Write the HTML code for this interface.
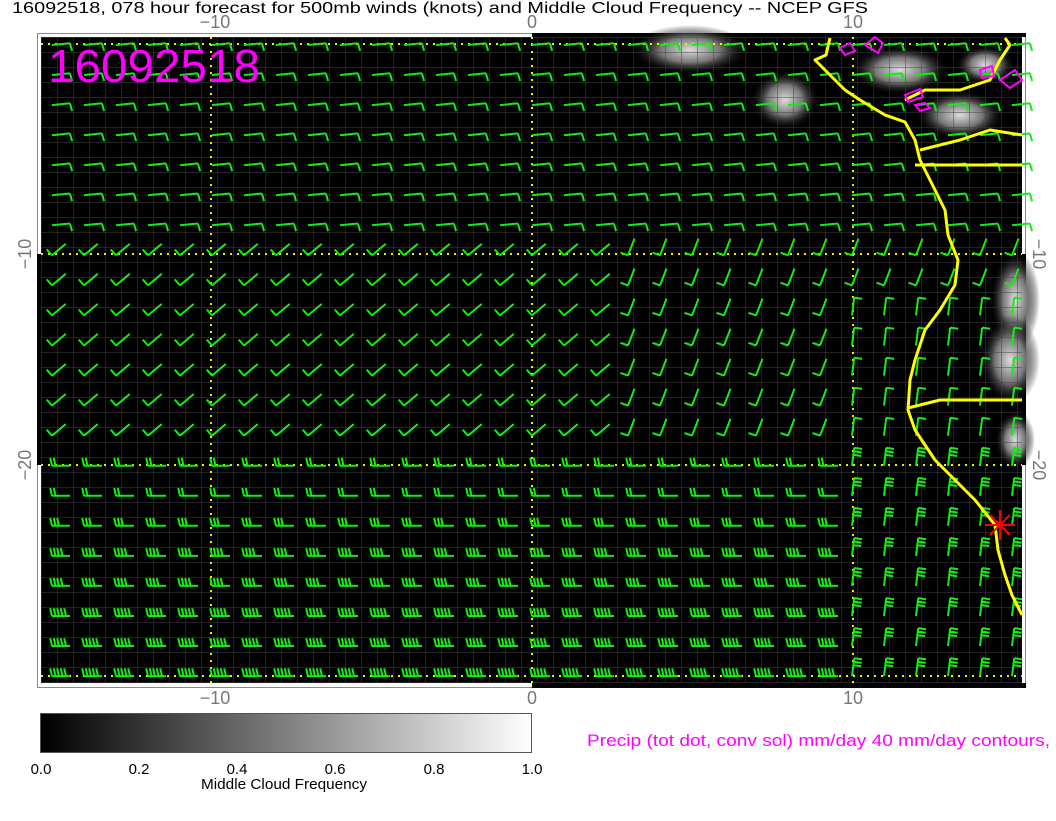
<!DOCTYPE html>
<html><head><meta charset="utf-8"><style>
body{margin:0;width:1056px;height:816px;background:#fff;overflow:hidden;font-family:"Liberation Sans",sans-serif}
</style></head><body>
<svg id="s" width="1056" height="816" xmlns="http://www.w3.org/2000/svg" font-family="Liberation Sans, sans-serif">
<defs>
<linearGradient id="cb"><stop offset="0" stop-color="#000"/><stop offset="1" stop-color="#fff"/></linearGradient>
<radialGradient id="cl"><stop offset="0" stop-color="#ddd"/><stop offset=".5" stop-color="#777"/><stop offset="1" stop-color="#000" stop-opacity="0"/></radialGradient>
<pattern id="gr" x="41" y="37" width="16" height="15" patternUnits="userSpaceOnUse"><path d="M0 0V15M0 0H16" stroke="#444" stroke-width="1" fill="none"/></pattern>
</defs>
<text x="12" y="13" font-size="16" textLength="856" lengthAdjust="spacingAndGlyphs">16092518, 078 hour forecast for 500mb winds (knots) and Middle Cloud Frequency -- NCEP GFS</text>
<rect x="37.5" y="33.5" width="988" height="654" fill="#fff" stroke="#888"/>
<rect x="532" y="33" width="494" height="4" fill="#000"/>
<rect x="532" y="683" width="494" height="5" fill="#000"/>
<rect x="37" y="254" width="4" height="211" fill="#000"/>
<rect x="1022" y="254" width="4" height="211" fill="#000"/>
<rect x="41" y="37" width="981" height="646" fill="#000"/>
<g id="clouds">
<ellipse cx="690" cy="50" rx="60" ry="25" fill="url(#cl)"/>
<ellipse cx="785" cy="100" rx="35" ry="30" fill="url(#cl)"/>
<ellipse cx="900" cy="70" rx="50" ry="25" fill="url(#cl)"/>
<ellipse cx="960" cy="115" rx="45" ry="25" fill="url(#cl)"/>
<ellipse cx="985" cy="65" rx="30" ry="20" fill="url(#cl)"/>
<ellipse cx="1015" cy="300" rx="25" ry="50" fill="url(#cl)"/>
<ellipse cx="1010" cy="360" rx="30" ry="45" fill="url(#cl)"/>
<ellipse cx="1015" cy="440" rx="20" ry="30" fill="url(#cl)"/>
</g>
<rect x="41" y="37" width="981" height="646" fill="url(#gr)"/>
<g stroke="#ee0" stroke-width="2" stroke-dasharray="2 5" fill="none">
<path d="M211 37V683M532 37V683M853 37V683M41 44H1022M41 254H1022M41 465H1022M41 676H1022"/>
</g>
<g id="barbs" stroke="#1e1" stroke-width="2" fill="none"></g>
<g stroke="#ff0" stroke-width="3" fill="none" stroke-linejoin="round">
<path d="M830 38L826 55L815 60L830 75L845 90L860 100L885 115L905 122L915 140L920 160L935 190L945 210L948 235L958 260L955 285L940 310L925 330L915 360L910 380L908 410L915 430L935 460L955 480L975 500L995 525L998 550L1005 575L1012 595L1022 615"/>
<path d="M915 165H1022M908 408L940 400H1022M920 150L960 140L990 130L1022 135"/>
<path d="M905 100L925 90L960 90L990 80L1000 60L1010 45L1005 38"/>
</g>
<g stroke="#f0f" stroke-width="2" fill="none">
<path d="M840 48l10-5 5 8-10 4zM865 45l10-8 8 6-5 10zM980 70l12-4 2 10-12 2zM1000 80l15-10 7 10-12 8zM905 95l15-6 3 8-15 5zM915 105l10-2 5 5-10 3z"/>
</g>
<g stroke="#f00" stroke-width="2"><path d="M985 525H1015M1000 510V540M990 515L1010 535M990 535L1010 515"/></g>
<text x="48" y="82" font-size="46" fill="#f0f" textLength="212" lengthAdjust="spacingAndGlyphs">16092518</text>
<g font-size="18" fill="#777" text-anchor="middle">
<text x="215" y="28">−10</text><text x="532" y="28">0</text><text x="853" y="28">10</text>
<text x="215" y="704">−10</text><text x="532" y="704">0</text><text x="853" y="704">10</text>
<text transform="translate(31,254) rotate(-90)">−10</text>
<text transform="translate(31,465) rotate(-90)">−20</text>
<text transform="translate(1033,254) rotate(90)">−10</text>
<text transform="translate(1033,465) rotate(90)">−20</text>
</g>
<rect x="40.5" y="713.5" width="491" height="39" fill="url(#cb)" stroke="#555"/>
<g font-size="15" text-anchor="middle">
<text x="41" y="774">0.0</text><text x="139" y="774">0.2</text><text x="237" y="774">0.4</text><text x="335" y="774">0.6</text><text x="434" y="774">0.8</text><text x="532" y="774">1.0</text>
<text x="284" y="789" textLength="166" lengthAdjust="spacingAndGlyphs">Middle Cloud Frequency</text>
</g>
<text x="587" y="746" font-size="17" fill="#f0f" textLength="463" lengthAdjust="spacingAndGlyphs">Precip (tot dot, conv sol) mm/day 40 mm/day contours,</text>
</svg>
<script>
var g=document.getElementById('barbs'),d='';
function L(x1,y1,x2,y2){d+='M'+x1.toFixed(1)+' '+y1.toFixed(1)+'L'+x2.toFixed(1)+' '+y2.toFixed(1);}
for(var r=0;r<22;r++){var y=45+r*30.05;
for(var c=0;c<31;c++){var x=52+c*32;
if(x>1015)continue;
var th,n,fs;
if(y<240){th=-0.1;n=1;fs=1.4;}
else if(y<460){th=-0.7-(x>600?0.5:0);n=1;fs=-1.6;}
else{th=0;n=2+Math.min(3,Math.floor((y-460)/45));fs=-1.8;}
if(x>820&&y>300){th=-1.45;n=y>460?3:1;fs=1.6;}
var len=18,ex=x+len*Math.cos(th),ey=y+len*Math.sin(th);
var sx=x,sy=y;
L(sx,sy,ex,ey);
var tx=(y<240)?ex:sx,ty=(y<240)?ey:sy;
if(x>820&&y>300){tx=ex;ty=ey;}
for(var k=0;k<n;k++){var f=k*3.5;
var bx=tx+(tx==sx?1:-1)*f*Math.cos(th),by=ty+(tx==sx?1:-1)*f*Math.sin(th);
L(bx,by,bx+8*Math.cos(th+fs),by+8*Math.sin(th+fs));}
}}
var p=document.createElementNS('http://www.w3.org/2000/svg','path');p.setAttribute('d',d);g.appendChild(p);
</script>
</body></html>
